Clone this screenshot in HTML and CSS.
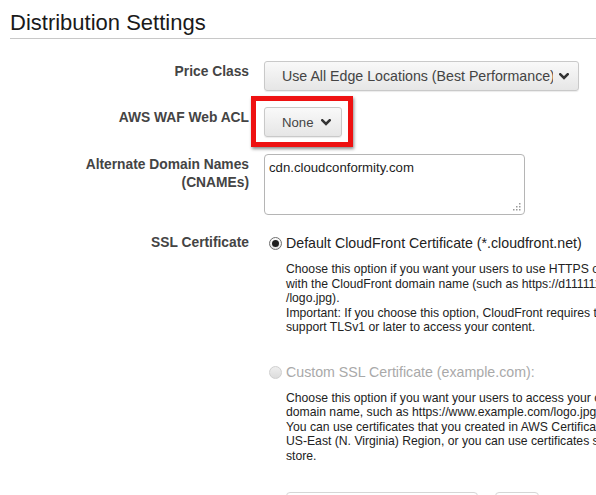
FILE: index.html
```html
<!DOCTYPE html>
<html>
<head>
<meta charset="utf-8">
<link rel="stylesheet" href="styles.css">
</head>
<body>
<div class="page">
  <h1 class="title">Distribution Settings</h1>

  <div class="row row-price">
    <div class="label">Price Class</div>
    <div class="control">
      <div class="select select-wide">
        <span class="select-text">Use All Edge Locations (Best Performance)</span>
        <svg class="chev" width="10" height="7" viewBox="0 0 10 7"><polyline points="1.3,1.3 5,5 8.7,1.3" fill="none" stroke="#333" stroke-width="2.6" stroke-linecap="square"/></svg>
      </div>
    </div>
  </div>

  <div class="row row-waf">
    <div class="label">AWS WAF Web ACL</div>
    <div class="control">
      <div class="waf-wrap">
        <div class="select select-small">
          <span class="select-text">None</span>
          <svg class="chev" width="10" height="7" viewBox="0 0 10 7"><polyline points="1.3,1.3 5,5 8.7,1.3" fill="none" stroke="#333" stroke-width="2.6" stroke-linecap="square"/></svg>
        </div>
        <div class="highlight"></div>
      </div>
    </div>
  </div>

  <div class="row row-cname">
    <div class="label">Alternate Domain Names<br>(CNAMEs)</div>
    <div class="control">
      <div class="textarea">
        cdn.cloudconformity.com
        <svg class="grip" width="8" height="8" viewBox="0 0 8 8" fill="#999">
          <rect x="6" y="0" width="1.5" height="1.5"/>
          <rect x="3" y="3" width="1.5" height="1.5"/>
          <rect x="6" y="3" width="1.5" height="1.5"/>
          <rect x="0" y="6" width="1.5" height="1.5"/>
          <rect x="3" y="6" width="1.5" height="1.5"/>
          <rect x="6" y="6" width="1.5" height="1.5"/>
        </svg>
      </div>
    </div>
  </div>

  <div class="row row-ssl">
    <div class="label label-ssl">SSL Certificate</div>
    <div class="control">
      <div class="option">
        <span class="radio radio-on"></span>
        <span class="option-text">Default CloudFront Certificate (*.cloudfront.net)</span>
      </div>
      <p class="desc">Choose this option if you want your users to use HTTPS or HTTP to access your content<br>with the CloudFront domain name (such as https://d111111abcdef8.cloudfront.net<br>/logo.jpg).<br>Important: If you choose this option, CloudFront requires that browsers or devices<br>support TLSv1 or later to access your content.</p>

      <div class="option option-custom">
        <span class="radio radio-off"></span>
        <span class="option-text disabled">Custom SSL Certificate (example.com):</span>
      </div>
      <p class="desc desc-custom">Choose this option if you want your users to access your content by using an alternate<br>domain name, such as https://www.example.com/logo.jpg.<br>You can use certificates that you created in AWS Certificate Manager (ACM) in the<br>US-East (N. Virginia) Region, or you can use certificates stored in IAM certificate<br>store.</p>

      <div class="cert-inputs">
        <div class="cert-box cert-box-wide"></div>
        <div class="cert-box cert-box-small"></div>
      </div>
    </div>
  </div>
</div>
</body>
</html>
```

FILE: styles.css
```css
html, body {
  margin: 0;
  padding: 0;
  background: #fff;
  overflow: hidden;
}

body {
  font-family: "Liberation Sans", Arial, sans-serif;
  color: #222;
}

.page {
  margin-left: 10px;
  width: 900px;
}

.title {
  margin: 0;
  padding-top: 10px;
  padding-bottom: 2px;
  font-size: 22px;
  line-height: 26px;
  font-weight: normal;
  color: #1a1a1a;
  border-bottom: 1px solid #c8c8c8;
  width: 586px;
}

.row {
  display: grid;
  grid-template-columns: 239px 1fr;
  column-gap: 15px;
}

.row-price { margin-top: 22px; }
.row-waf { margin-top: 16px; }
.row-cname { margin-top: 17px; }
.row-ssl { margin-top: 19px; }

.label {
  text-align: right;
  font-weight: bold;
  font-size: 13.8px;
  line-height: 18px;
  color: #444;
  padding-top: 2px;
}

.label-ssl {
  padding-top: 0;
}

.select {
  box-sizing: border-box;
  height: 30px;
  display: flex;
  align-items: center;
  border: 1px solid #c9c9c9;
  border-radius: 3px;
  background: linear-gradient(#f9f9f9, #e6e6e6);
  box-shadow: 0 1px 1px rgba(0,0,0,0.08);
  color: #444;
  font-size: 13.2px;
  padding-left: 17px;
}

.select-wide {
  width: 315px;
  padding-right: 11px;
  font-size: 14.2px;
}

.select-wide .select-text {
  width: 271px;
  overflow: hidden;
  white-space: nowrap;
  flex: none;
}

.select-wide .chev {
  margin-left: 6px;
}

.select-small {
  width: 78px;
  padding-right: 11px;
}

.select-small .chev {
  margin-left: 7px;
}

.chev {
  flex: none;
  margin-top: 1px;
}

.waf-wrap {
  position: relative;
  width: 78px;
}

.highlight {
  position: absolute;
  left: -13px;
  top: -11px;
  width: 102px;
  height: 51px;
  box-sizing: border-box;
  border: 5px solid #ee1111;
  box-shadow: 1px 2px 3px rgba(0,0,0,0.45);
}

.textarea {
  position: relative;
  box-sizing: border-box;
  width: 261px;
  height: 61px;
  border: 1px solid #b5b5b5;
  border-radius: 4px;
  padding: 5px 4px;
  font-size: 13.2px;
  line-height: 16px;
  color: #222;
}

.grip {
  position: absolute;
  right: 3px;
  bottom: 3px;
}

.option {
  display: flex;
  align-items: center;
  height: 18px;
  margin-left: 5px;
}

.option-custom {
  margin-top: 28px;
}

.radio {
  box-sizing: border-box;
  width: 13px;
  height: 13px;
  border-radius: 50%;
  flex: none;
  margin-right: 4px;
  margin-top: 1px;
  display: flex;
  align-items: center;
  justify-content: center;
}

.radio-on {
  border: 1px solid #6f6f6f;
  background: linear-gradient(#fdfdfd, #e2e2e2);
}

.radio-on::after {
  content: "";
  width: 7px;
  height: 7px;
  border-radius: 50%;
  background: #1e1e1e;
}

.radio-off {
  border: 1px solid #cfcfcf;
  background: linear-gradient(#eeeeee, #dcdcdc);
}

.option-text {
  font-size: 14.2px;
  color: #222;
  white-space: nowrap;
}

.option-text.disabled {
  color: #a9a9a9;
}

.desc {
  margin: 10px 0 0 22px;
  font-size: 12.2px;
  line-height: 14.5px;
  color: #222;
  white-space: nowrap;
}

.desc-custom {
  margin-top: 10px;
}

.cert-inputs {
  display: flex;
  gap: 17px;
  margin-top: 29px;
  margin-left: 22px;
}

.cert-box {
  box-sizing: border-box;
  height: 30px;
  border: 1px solid #d6d6d6;
  border-radius: 4px;
}

.cert-box-wide { width: 192px; }
.cert-box-small { width: 44px; }
```
